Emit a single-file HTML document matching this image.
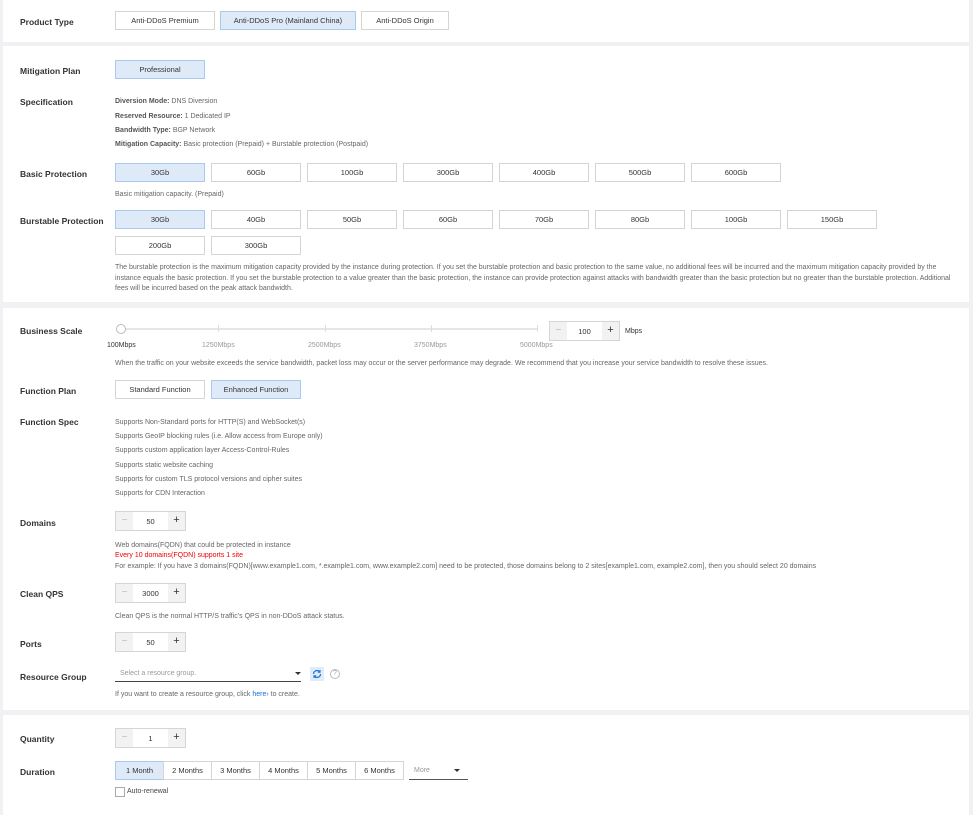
<!DOCTYPE html>
<html><head><meta charset="utf-8"><style>
*{margin:0;padding:0;box-sizing:border-box}
body{width:973px;height:815px;background:#f1f1f3;font-family:"Liberation Sans",sans-serif;position:relative;overflow:hidden;color:#333}
.p{position:absolute;left:3px;width:966px;background:#fff}
.a{position:absolute;white-space:nowrap}
.l{font-size:8.5px;font-weight:bold;color:#333;left:20px;margin-top:1px}
.b{position:absolute;height:19px;border:1px solid #d5d5d5;background:#fff;font-size:7.5px;color:#333;text-align:center;line-height:17px}
.s{background:#dfeaf8;border-color:#a9c9ee}
.t{position:absolute;font-size:7px;color:#666;white-space:nowrap;margin-top:2px}
.st{position:absolute;width:71px;height:20px;border:1px solid #d5d5d5;background:#fff;font-size:7.5px}
.st .m{position:absolute;left:0;top:0;width:17px;height:18px;background:#f2f2f2;color:#bbb;text-align:center;line-height:17px;font-size:10px}
.st .pl{position:absolute;right:0;top:0;width:17px;height:18px;background:#f2f2f2;color:#333;text-align:center;line-height:17px;font-size:11px}
.st .v{position:absolute;left:17px;right:17px;top:0;text-align:center;line-height:19px;color:#333}
</style></head><body>
<div class="p" style="top:0;height:42px"></div>
<div class="p" style="top:46px;height:256px"></div>
<div class="p" style="top:308px;height:402px"></div>
<div class="p" style="top:715px;height:100px"></div>

<div class="a l" style="top:16px">Product Type</div>
<div class="b" style="left:115px;top:11px;width:100px">Anti-DDoS Premium</div>
<div class="b s" style="left:220px;top:11px;width:136px">Anti-DDoS Pro (Mainland China)</div>
<div class="b" style="left:361px;top:11px;width:88px">Anti-DDoS Origin</div>

<div class="a l" style="top:65px">Mitigation Plan</div>
<div class="b s" style="left:115px;top:60px;width:90px">Professional</div>

<div class="a l" style="top:96px">Specification</div>
<div class="t" style="left:115px;top:96px"><b style="color:#555">Diversion Mode:</b> DNS Diversion</div>
<div class="t" style="left:115px;top:111px"><b style="color:#555">Reserved Resource:</b> 1 Dedicated IP</div>
<div class="t" style="left:115px;top:125px"><b style="color:#555">Bandwidth Type:</b> BGP Network</div>
<div class="t" style="left:115px;top:139px"><b style="color:#555">Mitigation Capacity:</b> Basic protection (Prepaid) + Burstable protection (Postpaid)</div>

<div class="a l" style="top:168px">Basic Protection</div>
<div class="b s" style="left:115px;top:163px;width:90px">30Gb</div>
<div class="b" style="left:211px;top:163px;width:90px">60Gb</div>
<div class="b" style="left:307px;top:163px;width:90px">100Gb</div>
<div class="b" style="left:403px;top:163px;width:90px">300Gb</div>
<div class="b" style="left:499px;top:163px;width:90px">400Gb</div>
<div class="b" style="left:595px;top:163px;width:90px">500Gb</div>
<div class="b" style="left:691px;top:163px;width:90px">600Gb</div>
<div class="t" style="left:115px;top:189px">Basic mitigation capacity. (Prepaid)</div>

<div class="a l" style="top:215px">Burstable Protection</div>
<div class="b s" style="left:115px;top:210px;width:90px">30Gb</div>
<div class="b" style="left:211px;top:210px;width:90px">40Gb</div>
<div class="b" style="left:307px;top:210px;width:90px">50Gb</div>
<div class="b" style="left:403px;top:210px;width:90px">60Gb</div>
<div class="b" style="left:499px;top:210px;width:90px">70Gb</div>
<div class="b" style="left:595px;top:210px;width:90px">80Gb</div>
<div class="b" style="left:691px;top:210px;width:90px">100Gb</div>
<div class="b" style="left:787px;top:210px;width:90px">150Gb</div>
<div class="b" style="left:115px;top:236px;width:90px">200Gb</div>
<div class="b" style="left:211px;top:236px;width:90px">300Gb</div>
<div class="t" style="left:115px;top:261px;width:845px;white-space:normal;line-height:10.7px">The burstable protection is the maximum mitigation capacity provided by the instance during protection. If you set the burstable protection and basic protection to the same value, no additional fees will be incurred and the maximum mitigation capacity provided by the instance equals the basic protection. If you set the burstable protection to a value greater than the basic protection, the instance can provide protection against attacks with bandwidth greater than the basic protection but no greater than the burstable protection. Additional fees will be incurred based on the peak attack bandwidth.</div>

<div class="a l" style="top:325px">Business Scale</div>
<div class="a" style="left:120px;top:328px;width:417px;height:2px;background:#e6e6e6"></div>
<div class="a" style="left:116px;top:324px;width:10px;height:10px;border:1px solid #bbb;border-radius:50%;background:#fff"></div>
<div class="a" style="left:218px;top:325px;width:1px;height:7px;background:#ddd"></div>
<div class="a" style="left:325px;top:325px;width:1px;height:7px;background:#ddd"></div>
<div class="a" style="left:431px;top:325px;width:1px;height:7px;background:#ddd"></div>
<div class="a" style="left:537px;top:325px;width:1px;height:7px;background:#ddd"></div>
<div class="t" style="left:107px;top:340px;color:#333">100Mbps</div>
<div class="t" style="left:202px;top:340px;color:#999">1250Mbps</div>
<div class="t" style="left:308px;top:340px;color:#999">2500Mbps</div>
<div class="t" style="left:414px;top:340px;color:#999">3750Mbps</div>
<div class="t" style="left:520px;top:340px;color:#999">5000Mbps</div>
<div class="st" style="left:549px;top:321px"><div class="m">−</div><div class="v">100</div><div class="pl">+</div></div>
<div class="t" style="left:625px;top:326px;color:#333">Mbps</div>
<div class="t" style="left:115px;top:358px">When the traffic on your website exceeds the service bandwidth, packet loss may occur or the server performance may degrade. We recommend that you increase your service bandwidth to resolve these issues.</div>

<div class="a l" style="top:385px">Function Plan</div>
<div class="b" style="left:115px;top:380px;width:90px">Standard Function</div>
<div class="b s" style="left:211px;top:380px;width:90px">Enhanced Function</div>

<div class="a l" style="top:416px">Function Spec</div>
<div class="t" style="left:115px;top:417px">Supports Non-Standard ports for HTTP(S) and WebSocket(s)</div>
<div class="t" style="left:115px;top:431px">Supports GeoIP blocking rules (i.e. Allow access from Europe only)</div>
<div class="t" style="left:115px;top:445px">Supports custom application layer Access-Control-Rules</div>
<div class="t" style="left:115px;top:460px">Supports static website caching</div>
<div class="t" style="left:115px;top:474px">Supports for custom TLS protocol versions and cipher suites</div>
<div class="t" style="left:115px;top:488px">Supports for CDN Interaction</div>

<div class="a l" style="top:517px">Domains</div>
<div class="st" style="left:115px;top:511px"><div class="m">−</div><div class="v">50</div><div class="pl">+</div></div>
<div class="t" style="left:115px;top:540px">Web domains(FQDN) that could be protected in instance</div>
<div class="t" style="left:115px;top:550px;color:#e00">Every 10 domains(FQDN) supports 1 site</div>
<div class="t" style="left:115px;top:561px">For example: If you have 3 domains(FQDN)[www.example1.com, *.example1.com, www.example2.com] need to be protected, those domains belong to 2 sites[example1.com, example2.com], then you should select 20 domains</div>

<div class="a l" style="top:588px">Clean QPS</div>
<div class="st" style="left:115px;top:583px"><div class="m">−</div><div class="v">3000</div><div class="pl">+</div></div>
<div class="t" style="left:115px;top:611px">Clean QPS is the normal HTTP/S traffic's QPS in non-DDoS attack status.</div>

<div class="a l" style="top:638px">Ports</div>
<div class="st" style="left:115px;top:632px"><div class="m">−</div><div class="v">50</div><div class="pl">+</div></div>

<div class="a l" style="top:671px">Resource Group</div>
<div class="a" style="left:115px;top:665px;width:186px;height:17px;border-bottom:1.5px solid #444"></div>
<div class="t" style="left:120px;top:668px;color:#999">Select a resource group.</div>
<div class="a" style="left:295px;top:672px;border:3px solid transparent;border-top:3px solid #333"></div>
<div class="a" style="left:310px;top:667px;width:14px;height:14px;background:#e2ecf8"></div>
<svg class="a" style="left:312px;top:669px" width="10" height="10" viewBox="0 0 10 10"><path d="M1.5 5a3.5 3.5 0 0 1 6-2.4M8.5 5a3.5 3.5 0 0 1-6 2.4" fill="none" stroke="#1a73d9" stroke-width="1.2"/><path d="M8 1v2.2H5.8M2 9V6.8h2.2" fill="none" stroke="#1a73d9" stroke-width="1.1"/></svg>
<div class="a" style="left:330px;top:669px;width:10px;height:10px;border:1px solid #bbb;border-radius:50%;font-size:7px;color:#aaa;text-align:center;line-height:8px">?</div>
<div class="t" style="left:115px;top:689px">If you want to create a resource group, click <span style="color:#1a6fd6">here›</span> to create.</div>

<div class="a l" style="top:733px">Quantity</div>
<div class="st" style="left:115px;top:728px"><div class="m">−</div><div class="v">1</div><div class="pl">+</div></div>

<div class="a l" style="top:766px">Duration</div>
<div class="b s" style="left:115px;top:761px;width:49px">1 Month</div>
<div class="b" style="left:163px;top:761px;width:49px">2 Months</div>
<div class="b" style="left:211px;top:761px;width:49px">3 Months</div>
<div class="b" style="left:259px;top:761px;width:49px">4 Months</div>
<div class="b" style="left:307px;top:761px;width:49px">5 Months</div>
<div class="b" style="left:355px;top:761px;width:49px">6 Months</div>
<div class="a" style="left:409px;top:762px;width:59px;height:18px;border-bottom:1.5px solid #555"></div>
<div class="t" style="left:414px;top:765px;color:#999">More</div>
<div class="a" style="left:454px;top:769px;border:3px solid transparent;border-top:3px solid #333"></div>
<div class="a" style="left:115px;top:787px;width:10px;height:10px;border:1px solid #aaa;background:#fff"></div>
<div class="t" style="left:127px;top:786px;color:#444">Auto-renewal</div>
</body></html>
